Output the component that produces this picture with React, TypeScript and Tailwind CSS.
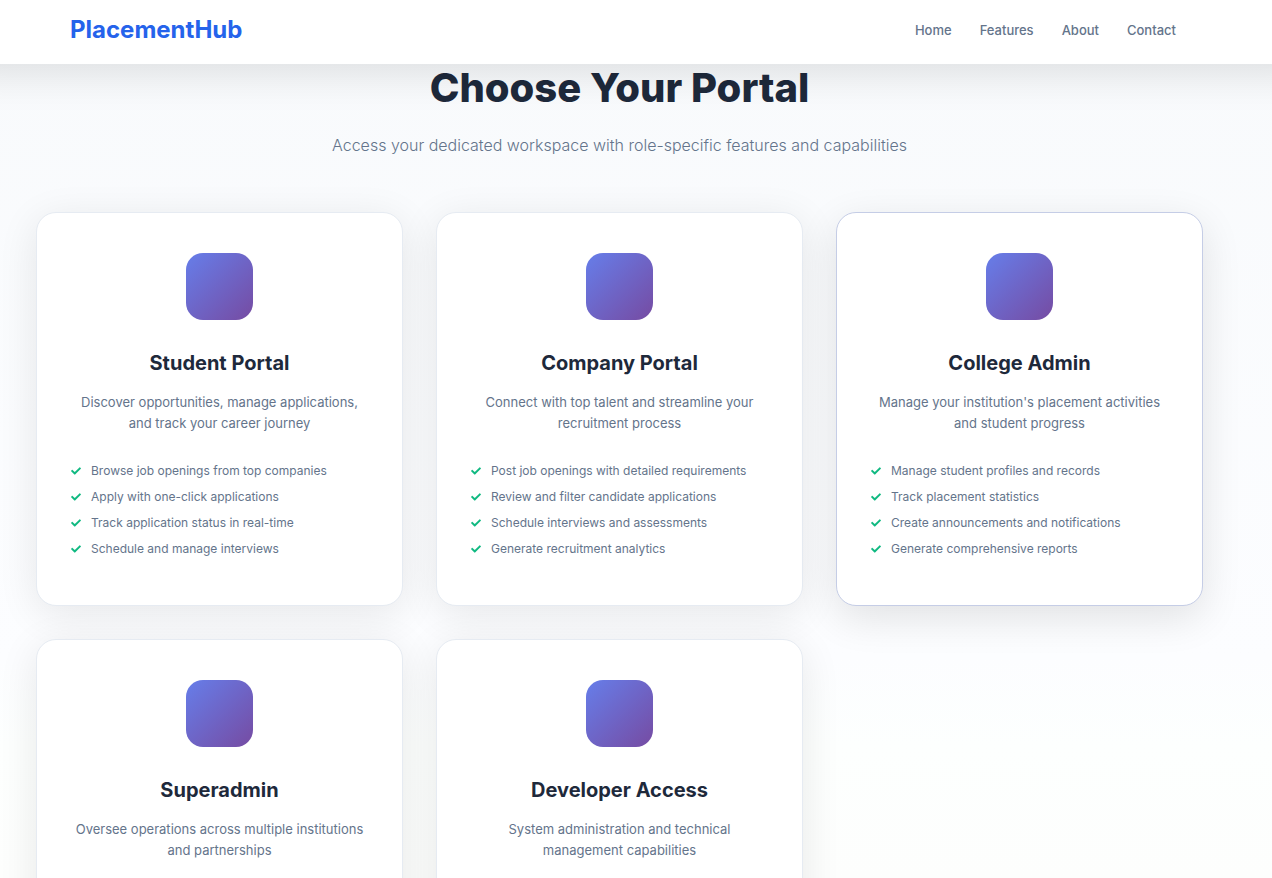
import { FaCheck } from "react-icons/fa";

type Portal = {
  title: string;
  description: string;
  features: string[];
  active?: boolean;
};

const links = ["Home", "Features", "About", "Contact"];

const portals: Portal[] = [
  {
    title: "Student Portal",
    description: "Discover opportunities, manage applications, and track your career journey",
    features: [
      "Browse job openings from top companies",
      "Apply with one-click applications",
      "Track application status in real-time",
      "Schedule and manage interviews",
    ],
  },
  {
    title: "Company Portal",
    description: "Connect with top talent and streamline your recruitment process",
    features: [
      "Post job openings with detailed requirements",
      "Review and filter candidate applications",
      "Schedule interviews and assessments",
      "Generate recruitment analytics",
    ],
  },
  {
    title: "College Admin",
    description: "Manage your institution's placement activities and student progress",
    features: [
      "Manage student profiles and records",
      "Track placement statistics",
      "Create announcements and notifications",
      "Generate comprehensive reports",
    ],
    active: true,
  },
  {
    title: "Superadmin",
    description: "Oversee operations across multiple institutions and partnerships",
    features: [],
  },
  {
    title: "Developer Access",
    description: "System administration and technical management capabilities",
    features: [],
  },
];

function PortalCard({ title, description, features, active }: Portal) {
  return (
    <article
      className={
        active
          ? "rounded-[20px] border border-[#c5cde6] bg-white px-[34px] pt-10 pb-[43px] shadow-[0_12px_40px_rgba(0,0,0,0.11)]"
          : "rounded-[20px] border border-[#e6ebf2] bg-white px-[34px] pt-10 pb-[43px] shadow-[0_8px_40px_rgba(0,0,0,0.09)]"
      }
    >
      <div className="mx-auto size-[67px] rounded-[17px] bg-[linear-gradient(135deg,#667eea_0%,#764ba2_100%)]" />
      <h3 className="mt-7 text-center text-xl leading-[30px] font-bold text-[#1e293b]">{title}</h3>
      <p className="mt-3.5 text-center text-[13px] leading-[21px] text-[#64748b]">{description}</p>
      {features.length > 0 && (
        <ul className="mt-6 text-xs leading-[18px] text-[#64748b]">
          {features.map((feature) => (
            <li key={feature} className="flex items-center gap-2.5 py-1">
              <FaCheck className="size-2.5 text-[#10b981]" aria-hidden="true" />
              <span>{feature}</span>
            </li>
          ))}
        </ul>
      )}
    </article>
  );
}

export default function App() {
  return (
    <div className="h-screen overflow-hidden bg-[linear-gradient(180deg,#f8fafc_0%,#fcfdff_75%,#fdfffe_85%,#fdfefd_100%)] font-['Inter','Liberation_Sans',sans-serif]">
      <header className="relative z-10 flex h-16 items-center justify-between bg-white pr-24 pl-[70px] shadow-[0_-32px_40px_40px_rgba(0,0,0,0.12)]">
        <a href="#home" className="pb-1 text-2xl font-bold text-[#2563eb]">
          PlacementHub
        </a>
        <nav className="flex gap-7 pb-0.5 text-[13px] font-medium text-[#64748b]">
          {links.map((link) => (
            <a key={link} href={`#${link.toLowerCase()}`}>
              {link}
            </a>
          ))}
        </nav>
      </header>
      <main className="pr-[69px] pl-9">
        <div className="text-center">
          <h2 className="text-[40px] leading-[48px] font-extrabold text-[#1e293b]">Choose Your Portal</h2>
          <p className="mt-5 text-base leading-[26px] font-light text-[#64748b]">
            Access your dedicated workspace with role-specific features and capabilities
          </p>
        </div>
        <div className="mt-[54px] grid auto-rows-fr grid-cols-3 gap-[33px]">
          {portals.map((portal) => (
            <PortalCard key={portal.title} {...portal} />
          ))}
        </div>
      </main>
    </div>
  );
}
